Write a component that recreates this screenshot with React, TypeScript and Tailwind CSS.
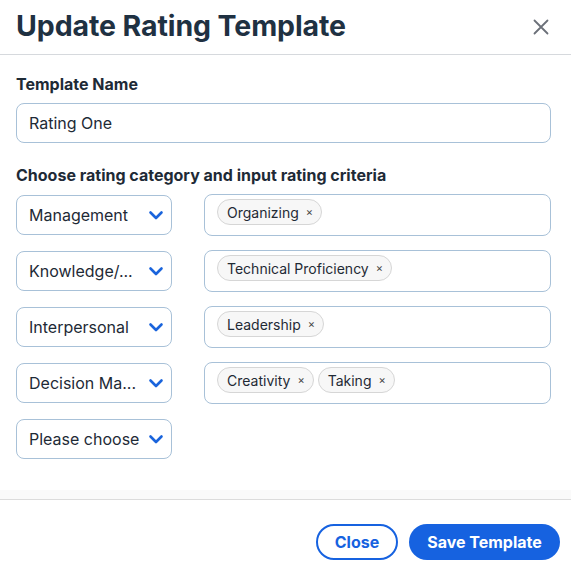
import React from "react";

const Chevron = () => (
  <svg width="16" height="16" viewBox="0 0 16 16" fill="none" className="shrink-0">
    <path d="M2.5 5.5L8 11L13.5 5.5" stroke="#1a64dc" strokeWidth="2.6" strokeLinecap="round" strokeLinejoin="round" />
  </svg>
);

const Tag = ({ label }: { label: string }) => (
  <span className="inline-flex items-center h-[26px] pl-[9px] pr-[8px] rounded-full border border-[#d6d6d6] bg-[#f7f7f7] text-[14px] text-[#1f2a35] gap-[7px]">
    {label}
    <span className="text-[11px] text-[#444] leading-none">×</span>
  </span>
);

const rows: { cat: string; tags: string[] }[] = [
  { cat: "Management", tags: ["Organizing"] },
  { cat: "Knowledge/...", tags: ["Technical Proficiency"] },
  { cat: "Interpersonal", tags: ["Leadership"] },
  { cat: "Decision Ma...", tags: ["Creativity", "Taking"] },
  { cat: "Please choose", tags: [] },
];

export default function App() {
  return (
    <div className="w-[571px] h-[577px] bg-white text-[#1e2a36] overflow-hidden" style={{ fontFamily: "Inter, 'Noto Sans', sans-serif" }}>
      <div className="flex items-center justify-between h-[55px] pl-[16px] pr-[22px] border-b border-[#d6d9dd]">
        <h1 className="text-[28.5px] font-bold text-[#1f3142] tracking-[-0.1px] pb-[1px]">Update Rating Template</h1>
        <svg width="16" height="16" viewBox="0 0 16 16" fill="none">
          <path d="M1.5 1.5L14.5 14.5M14.5 1.5L1.5 14.5" stroke="#6b7079" strokeWidth="1.8" strokeLinecap="round" />
        </svg>
      </div>
      <div className="px-[16px] pr-[20px] pt-[19px] h-[435px]">
        <div className="text-[16px] font-bold leading-[20px]">Template Name</div>
        <div className="mt-[9px] h-[40px] rounded-[8px] border border-[#a8c1d8] flex items-center px-[12px] text-[16px]">Rating One</div>
        <div className="mt-[22px] text-[16px] font-bold leading-[20px]">Choose rating category and input rating criteria</div>
        <div className="mt-[10px] flex flex-col gap-[16px]">
          {rows.map((r) => (
            <div key={r.cat} className="flex items-center gap-[32px] h-[40px]">
              <div className="w-[156px] h-[40px] rounded-[8px] border border-[#a8c1d8] flex items-center justify-between pl-[12px] pr-[7px] text-[16px] shrink-0">
                <span className="whitespace-nowrap">{r.cat}</span>
                <Chevron />
              </div>
              {r.cat !== "Please choose" && (
                <div className="flex-1 h-[42px] rounded-[8px] border border-[#a8c1d8] flex items-start gap-[4px] pt-[4px] px-[12px]">
                  {r.tags.map((t) => (
                    <Tag key={t} label={t} />
                  ))}
                </div>
              )}
            </div>
          ))}
        </div>
      </div>
      <div className="h-[10px] bg-[#fafafa] border-b border-[#dcdcdc]"></div>
      <div className="flex justify-end gap-[11px] pr-[11px] pt-[24px]">
        <button className="h-[36px] w-[82px] rounded-full border-2 border-[#1662e0] text-[#1662e0] text-[16px] font-bold">Close</button>
        <button className="h-[36px] w-[151px] rounded-full bg-[#1662e0] text-white text-[16px] font-bold">Save Template</button>
      </div>
    </div>
  );
}
